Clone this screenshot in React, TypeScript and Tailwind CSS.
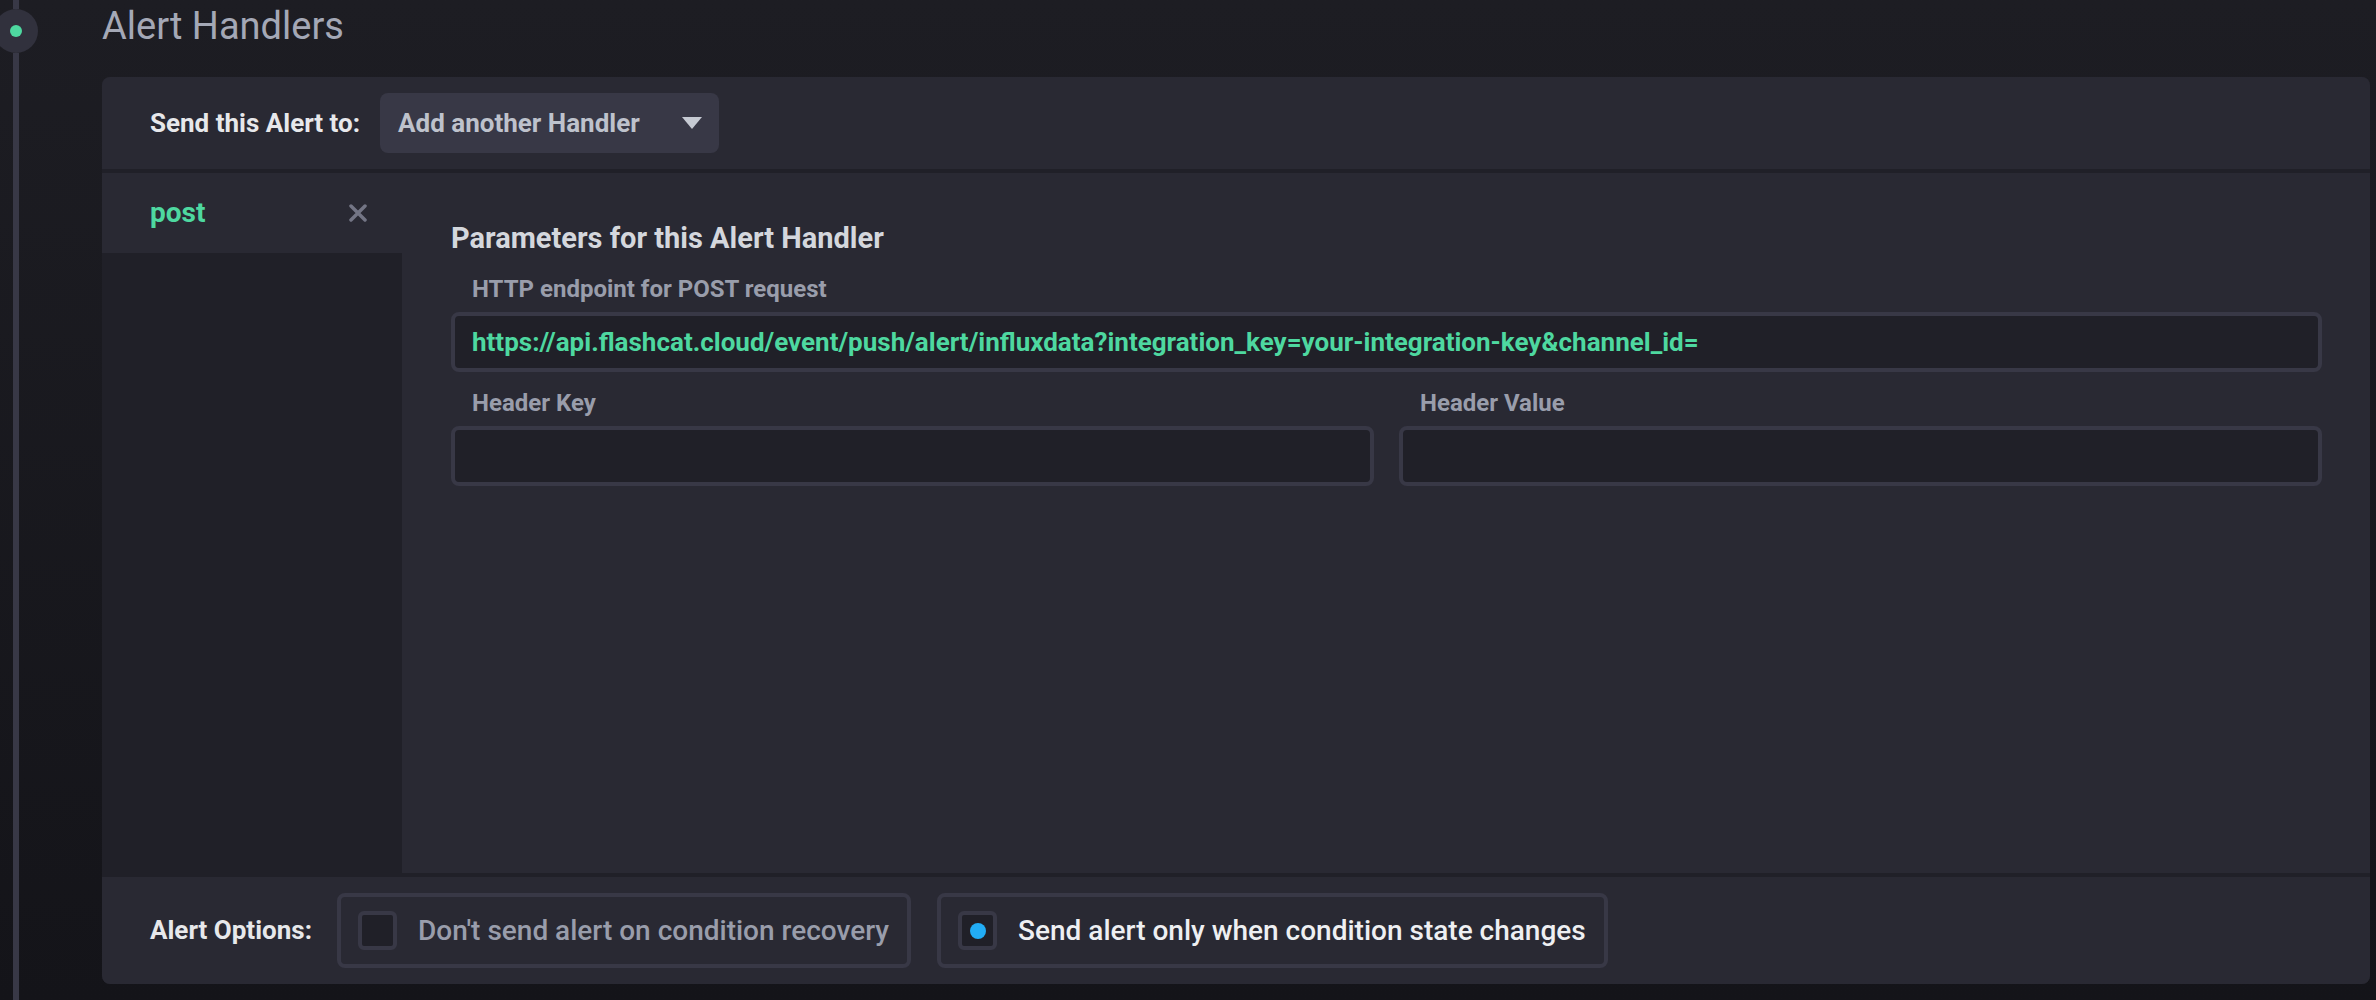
import React from 'react';

const Timeline: React.FC = () => (
  <div className="w-[32px] shrink-0 flex flex-col items-center">
    <div className="w-[6px] h-[9px] bg-[#383846]" />
    <div className="w-[44px] h-[44px] shrink-0 rounded-full bg-[#31313d] flex items-center justify-center">
      <div className="w-[12px] h-[12px] rounded-full bg-[#4ed8a0]" />
    </div>
    <div className="w-[6px] flex-1 bg-[#383846]" />
  </div>
);

const Field: React.FC<{ label: string; value?: string; className?: string }> = ({ label, value, className }) => (
  <div className={className}>
    <div className="pl-[21px] text-[24px] leading-[28px] font-bold text-[#999dab]">{label}</div>
    <div className="mt-[9px] h-[60px] border-[4px] border-[#383846] bg-[#202028] rounded-[8px] px-[17px] flex items-center">
      <span className="text-[26px] font-bold text-[#4ed8a0] whitespace-nowrap">{value}</span>
    </div>
  </div>
);

const Option: React.FC<{ label: string; checked?: boolean }> = ({ label, checked }) => (
  <div className="h-[75px] border-[4px] border-[#383846] rounded-[8px] pl-[17px] pr-[18px] flex items-center gap-[21px]">
    <div className="w-[39px] h-[39px] border-[4px] border-[#383846] bg-[#202028] rounded-[6px] flex items-center justify-center">
      {checked && <div className="w-[16px] h-[16px] rounded-full bg-[#22adf6]" />}
    </div>
    <span className={`text-[28px] font-medium whitespace-nowrap ${checked ? 'text-[#eeeff2]' : 'text-[#999dab]'}`}>
      {label}
    </span>
  </div>
);

export default function App() {
  return (
    <div className="h-[1000px] w-[2376px] overflow-hidden flex bg-gradient-to-b from-[#1d1d23] to-[#141419] font-[Roboto,sans-serif]">
      <Timeline />

      <div className="flex-1 flex flex-col pl-[70px] pr-[6px]">
        {/* Heading */}
        <h1 className="mt-[3px] text-[38px] leading-[46px] font-normal text-[#a4a8b6]">Alert Handlers</h1>

        {/* Panel */}
        <div className="mt-[28px] h-[907px] rounded-[8px] overflow-hidden bg-[#202028] flex flex-col">
          <div className="h-[92px] shrink-0 bg-[#292933] px-[48px] flex items-center">
            <span className="text-[26px] font-bold text-[#e7e8eb]">Send this Alert to:</span>
            <button className="ml-[20px] w-[339px] h-[60px] rounded-[8px] bg-[#383846] pl-[18px] pr-[17px] flex items-center justify-between">
              <span className="text-[26px] font-bold text-[#bec2cc]">Add another Handler</span>
              <svg width="20" height="12" viewBox="0 0 20 12">
                <polygon points="0,0 20,0 10,12" fill="#c6cad3" />
              </svg>
            </button>
          </div>

          <div className="h-[4px] shrink-0" />

          <div className="h-[700px] shrink-0 flex">
            {/* Handler list */}
            <div className="w-[300px] shrink-0 bg-[#202028]">
              <div className="h-[80px] bg-[#292933] pl-[48px] pr-[35px] flex items-center justify-between">
                <span className="text-[28px] font-bold text-[#4ed8a0]">post</span>
                <svg width="18" height="18" viewBox="0 0 18 18">
                  <path d="M2 2 L16 16 M16 2 L2 16" stroke="#737585" strokeWidth="3.5" strokeLinecap="round" />
                </svg>
              </div>
            </div>

            {/* Parameters */}
            <div className="flex-1 bg-[#292933] pt-[48px] pl-[49px] pr-[48px]">
              <h2 className="text-[29px] leading-[34px] font-bold text-[#d4d7dd]">Parameters for this Alert Handler</h2>
              <Field
                className="mt-[20px]"
                label="HTTP endpoint for POST request"
                value="https://api.flashcat.cloud/event/push/alert/influxdata?integration_key=your-integration-key&channel_id="
              />
              <div className="mt-[17px] grid grid-cols-2 gap-x-[25px]">
                <Field label="Header Key" />
                <Field label="Header Value" />
              </div>
            </div>
          </div>

          <div className="h-[4px] shrink-0" />

          <div className="flex-1 bg-[#292933] px-[48px] flex items-center">
            <span className="text-[26px] font-bold text-[#e7e8eb]">Alert Options:</span>
            <div className="ml-[25px] flex gap-[26px]">
              <Option label="Don't send alert on condition recovery" />
              <Option label="Send alert only when condition state changes" checked />
            </div>
          </div>
        </div>
      </div>
    </div>
  );
}
